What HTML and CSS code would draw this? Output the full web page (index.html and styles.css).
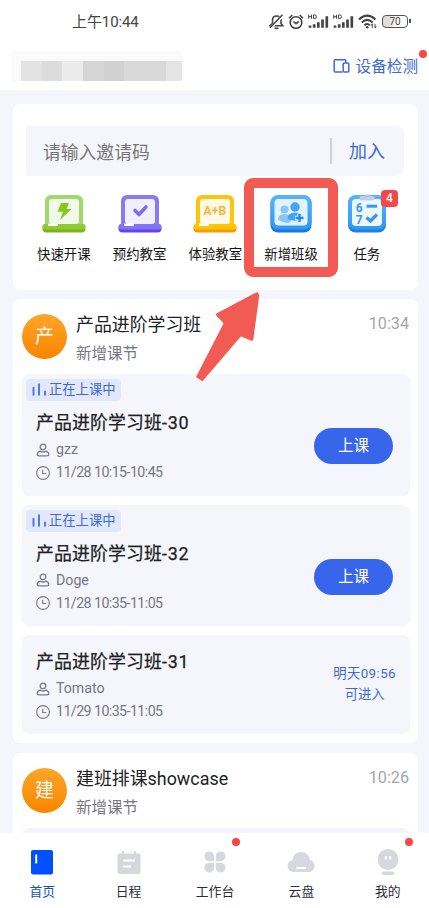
FILE: index.html
```html
<!DOCTYPE html>
<html lang="zh-CN">
<head>
<meta charset="utf-8">
<meta name="viewport" content="width=device-width, initial-scale=1">
<title>首页</title>
<link rel="stylesheet" href="styles.css">
</head>
<body>
<svg class="defs" width="0" height="0" aria-hidden="true">
  <defs>
    <linearGradient id="blue" x1="0" y1="0" x2="0" y2="1"><stop offset="0" stop-color="#55b4ff"/><stop offset="1" stop-color="#2f97f5"/></linearGradient>
    <symbol id="person" viewBox="0 0 14 14"><g fill="none" stroke="#777b89" stroke-width="1.3"><circle cx="7" cy="3.9" r="2.8"/><path d="M4.300 8.200C2.200 8.800 1.200 9.900 1.200 11.200c0 1.100.8 1.600 1.800 1.600h8c1 0 1.800-.5 1.800-1.600 0-1.300-1-2.400-3.100-3-1.700 1-3.700 1-5.400 0z"/></g></symbol>
    <symbol id="clock" viewBox="0 0 14 14"><g fill="none" stroke="#777b89" stroke-width="1.1"><circle cx="7" cy="7" r="6.4"/><path d="M6.700 3.800v3.700h3.500"/></g></symbol>
    <symbol id="bars" viewBox="0 0 15 14"><path d="M1.500 4.800v7M7 1.200v10.600M13 8.500v3.300" fill="none" stroke="#4a76e6" stroke-width="1.900" stroke-linecap="round"/></symbol>
    <symbol id="signal" viewBox="0 0 21 15"><path d="M.7.7v4M3.500.7v4M.7 2.700h2.800M5.500.9v3.600h1.200q1.700 0 1.700-1.800T6.700.9z" fill="none" stroke="#444" stroke-width="1"/><path d="M2 13.800v-2.400M6.200 13.800v-3.600M10.300 13.800V8.200M14.500 13.800V5.600M18.800 13.800V2.200" fill="none" stroke="#444" stroke-width="2.700"/></symbol>
  </defs>
</svg>
<div class="page">
  <header class="top">
    <div class="status">
      <span class="status-time">上午10:44</span>
      <div class="status-icons">
        <svg width="15" height="16" viewBox="0 0 15 16"><g fill="none" stroke="#444" stroke-width="1.600"><path d="M1.200 11.700h12.600L12 9.400V6.200C12 3.800 10.200 2 7.700 2S3.500 3.800 3.500 6.200v3.200z"/><path d="M5.500 14.300h4"/><path d="M14 .8 1 14.800" stroke="#fff" stroke-width="3"/><path d="M13.500.8 1 13.800"/></g></svg>
        <svg width="16" height="16" viewBox="0 0 16 16"><g fill="none" stroke="#444" stroke-width="1.600"><circle cx="8" cy="8.500" r="5.800"/><path d="M1 4.300 4.300 1M15 4.300 11.700 1M5.400 7.500 8 9.700l2.800-2.200"/></g></svg>
        <svg width="21" height="15"><use href="#signal"/></svg>
        <svg width="21" height="15"><use href="#signal"/></svg>
        <svg width="19" height="15" viewBox="0 0 19 15"><g fill="none" stroke="#444" stroke-width="2"><path d="M1 5.400q8.200-7.600 16.400 0M3.800 8.400q5.400-5 10.800 0M6.400 11.200q2.800-2.400 5.400 0"/></g><circle cx="9.200" cy="13.200" r="1.300" fill="#444"/><path d="m13 11.600 1.300-1.800v4M17 9.800v4.200l1.300-1.800" fill="none" stroke="#444"/></svg>
        <span class="battery">70</span>
      </div>
    </div>
    <div class="titlebar">
      <div class="mask"><div class="mask-soft"></div><div class="mask-row"><i class="m0"></i><i class="m1"></i><i class="m2"></i><i class="m3"></i><i class="m4"></i><i class="m5"></i><i class="m6"></i><i class="m6"></i><i class="m7"></i></div></div>
      <div class="device"><svg width="17" height="16" viewBox="0 0 17 16"><g fill="none" stroke="#3c69d8" stroke-width="1.500"><path d="M9.500 14H2.200a1 1 0 0 1-1-1V2.800a1 1 0 0 1 1-1h9.600a1 1 0 0 1 1 1v1.700"/><rect x="10.200" y="5" width="5.600" height="9" rx="1"/></g></svg><span>设备检测</span><i class="dot device-dot"></i></div>
    </div>
  </header>

  <main class="content">
    <section class="card join-card">
      <div class="join"><span class="hint">请输入邀请码</span><span class="join-btn">加入</span></div>
      <div class="actions">
        <div class="action">
          <svg width="46" height="42" viewBox="0 0 46 42"><rect x="4" y="2" width="38" height="36" rx="6" fill="#a1d870"/><rect x="8" y="6" width="30" height="25" rx="3" fill="#f1f9e9"/><rect x="1.500" y="31" width="43" height="8.500" rx="4" fill="#7db321"/><rect x="1.500" y="31" width="43" height="5.500" rx="2.700" fill="#8fca2f"/><rect x="7" y="30.500" width="10" height="2.500" rx="1" fill="#fff"/><path d="M20 10h8l-2.500 6h5L19 27l3-8.300h-5.500z" fill="#86c71d"/></svg>
          <span>快速开课</span>
        </div>
        <div class="action">
          <svg width="46" height="42" viewBox="0 0 46 42"><rect x="4" y="2" width="38" height="36" rx="6" fill="#897af1"/><rect x="8" y="6" width="30" height="25" rx="3" fill="#f0efff"/><rect x="1.500" y="31" width="43" height="8.500" rx="4" fill="#6840ee"/><rect x="1.500" y="31" width="43" height="5.500" rx="2.700" fill="#8374f5"/><rect x="7" y="30.500" width="10" height="2.500" rx="1" fill="#fff"/><path d="m18 17.500 4 4 7-7.500" fill="none" stroke="#7d6cf0" stroke-width="3.600" stroke-linecap="round" stroke-linejoin="round"/></svg>
          <span>预约教室</span>
        </div>
        <div class="action">
          <svg width="46" height="42" viewBox="0 0 46 42"><rect x="4" y="2" width="38" height="36" rx="6" fill="#fdc50b"/><rect x="8" y="6" width="30" height="25" rx="3" fill="#fff9e5"/><rect x="1.500" y="31" width="43" height="8.500" rx="4" fill="#f49b0a"/><rect x="1.500" y="31" width="43" height="5.500" rx="2.700" fill="#ffc500"/><path d="M7 33v-2.500h6V29h3v2.500h1V33z" fill="#fff"/><text class="ab" x="23" y="22" text-anchor="middle">A+B</text></svg>
          <span>体验教室</span>
        </div>
        <div class="action">
          <svg width="46" height="42" viewBox="0 0 46 42"><rect x="2.500" y="3" width="41" height="36.500" rx="7.500" fill="#1979d6"/><rect x="2.500" y="2" width="41" height="34.500" rx="7.500" fill="url(#blue)"/><rect x="6.500" y="6" width="33" height="26.500" rx="4" fill="#e2f3ff"/><g fill="#87c6fa"><circle cx="16.500" cy="16.500" r="4"/><path d="M10 27q0-6 6.500-6t6.500 6-13 0z"/></g><g fill="#43a4f5"><circle cx="27" cy="14" r="4.700"/><path d="M19.500 26q0-6.500 7.500-6.500T34.500 26q-7.500 3.500-15 0z"/></g><path d="M31.500 20.500v9M27 25h9" stroke="#e2f3ff" stroke-width="4.500"/><path d="M31.500 21v8M27.500 25h8" stroke="#168df2" stroke-width="2.300"/></svg>
          <span>新增班级</span>
        </div>
        <div class="action">
          <svg width="46" height="42" viewBox="0 0 46 42"><rect x="4" y="3" width="38" height="36.500" rx="7.500" fill="#1f81df"/><rect x="4" y="2" width="38" height="34.500" rx="7.500" fill="url(#blue)"/><rect x="8" y="6" width="30" height="27" rx="4" fill="#edf8ff"/><rect x="15.500" y="3" width="15" height="4.500" rx="2" fill="#c0cfee"/><circle cx="23" cy="3.200" r="2" fill="#b8c8e9"/><text class="num" x="15.200" y="18.700" text-anchor="middle">6</text><text class="num" x="15.200" y="31" text-anchor="middle">7</text><path d="M22.500 13.200h10.500" stroke="#3797ef" stroke-width="3"/><path d="m22.500 24.500 4 3.500 6.500-6.500" fill="none" stroke="#3797ef" stroke-width="3.200"/></svg>
          <span>任务</span><b class="badge">4</b>
        </div>
        <div class="focus-box"></div>
        <svg class="arrow" width="70" height="96" viewBox="192 288 70 96"><path d="m257 293.500-40 21 8 8.500 16 12 11 4.500 6-44z" fill="#f15b54" stroke="#f15b54" stroke-width="2.500" stroke-linejoin="round"/><path d="m224.300 322-28.300 55 6.500 4.300 40-46.800z" fill="#f15b54"/></svg>
      </div>
    </section>

    <section class="card class-card">
      <div class="card-head"><span class="avatar">产</span><div class="names"><h2>产品进阶学习班</h2><p>新增课节</p></div><time>10:34</time></div>
      <div class="lessons">
        <article class="lesson live">
          <div class="tag"><svg width="15" height="14"><use href="#bars"/></svg><span>正在上课中</span></div>
          <div class="lesson-body"><div class="info"><h3>产品进阶学习班<span class="serial">-30</span></h3><p><svg width="14" height="14"><use href="#person"/></svg>gzz</p><p><svg width="14" height="14"><use href="#clock"/></svg><span class="date">11/28 10:15-10:45</span></p></div><span class="enter">上课</span></div>
        </article>
        <article class="lesson live">
          <div class="tag"><svg width="15" height="14"><use href="#bars"/></svg><span>正在上课中</span></div>
          <div class="lesson-body"><div class="info"><h3>产品进阶学习班<span class="serial">-32</span></h3><p><svg width="14" height="14"><use href="#person"/></svg>Doge</p><p><svg width="14" height="14"><use href="#clock"/></svg><span class="date">11/28 10:35-11:05</span></p></div><span class="enter">上课</span></div>
        </article>
        <article class="lesson next">
          <div class="lesson-body"><div class="info"><h3>产品进阶学习班<span class="serial">-31</span></h3><p><svg width="14" height="14"><use href="#person"/></svg>Tomato</p><p><svg width="14" height="14"><use href="#clock"/></svg><span class="date">11/29 10:35-11:05</span></p></div><div class="later"><span class="later-time">明天09:56</span><br>可进入</div></div>
        </article>
      </div>
    </section>

    <section class="card last-card">
      <div class="card-head"><span class="avatar">建</span><div class="names"><h2>建班排课showcase</h2><p>新增课节</p></div><time>10:26</time></div>
      <div class="lessons"><article class="lesson live"></article></div>
    </section>
  </main>

  <nav class="tabs">
    <div class="tab active"><svg width="30" height="30" viewBox="0 0 30 30"><rect x="4" y="3" width="22" height="24.500" rx="2" fill="#0050ff"/><path d="M9.200 7.500v9" stroke="#fff" stroke-width="2"/></svg><span>首页</span></div>
    <div class="tab"><svg width="30" height="30" viewBox="0 0 30 30"><rect x="3.500" y="6.500" width="23" height="20.500" rx="2" fill="#d7d8de"/><path d="M9 4v5M21 4v5" stroke="#d7d8de" stroke-width="2"/><path d="M9 13.500h12M9 19.500h8" stroke="#fff" stroke-width="2"/></svg><span>日程</span></div>
    <div class="tab"><svg width="30" height="30" viewBox="0 0 30 30"><g fill="#d7d8de"><path d="M14.200 14.200H9.100a4.900 4.900 0 1 1 5.100-5.100zM15.800 14.200h5.100a4.900 4.900 0 1 0-5.100-5.100zM14.200 15.800H9.100a4.900 4.900 0 1 0 5.100 5.100zM15.800 15.800h5.100a4.900 4.900 0 1 1-5.100 5.100z"/></g></svg><span>工作台</span><i class="dot"></i></div>
    <div class="tab"><svg width="30" height="30" viewBox="0 0 30 30"><path d="M7.500 25a6 6 0 0 1-6-6c0-3 2-5.200 4.800-5.800C7 8.500 10.500 5 15 5c4.700 0 8.300 3.200 9 8 2.600.3 4.500 3 4.500 6 0 3.500-2.400 6-5.500 6z" fill="#d7d8de"/><path d="M10.500 21h9.500" stroke="#fff" stroke-width="2"/></svg><span>云盘</span></div>
    <div class="tab"><svg width="30" height="30" viewBox="0 0 30 30"><circle cx="15" cy="12.500" r="10.500" fill="#d7d8de"/><path d="M12.800 9.700v2M17.200 9.700v2" stroke="#fff" stroke-width="2" stroke-linecap="round"/><path d="M10.500 26.200h9" stroke="#d7d8de" stroke-width="3.500" stroke-linecap="round"/></svg><span>我的</span><i class="dot"></i></div>
  </nav>
</div>
</body>
</html>
```
FILE: styles.css
```css
* { box-sizing: border-box; }
body { margin: 0; background: #f5f6fb; font-family: Roboto, "Noto Sans CJK SC", sans-serif; color: #202124; }
h2, h3, p { margin: 0; font-weight: 400; }
svg { display: block; flex: none; }
.defs { position: absolute; }
.page { width: 429px; height: 908px; display: flex; flex-direction: column; overflow: hidden; }
.dot { width: 8px; height: 8px; border-radius: 50%; background: #fb4545; }

.top { height: 90px; background: #fff; flex: none; }
.status { height: 43px; padding: 0 18px 0 72px; display: flex; align-items: center; justify-content: space-between; }
.status-time { font-size: 15px; line-height: 20px; color: #444; letter-spacing: -.1px; }
.status-icons { display: flex; align-items: center; gap: 4px; }
.battery { position: relative; width: 26px; height: 13px; margin-left: 1px; margin-right: 3px; border: 1.5px solid #555; border-radius: 4px; background: linear-gradient(90deg, #ddd 25%, #fff 55%); font-size: 10px; line-height: 11px; text-align: center; color: #444; }
.battery::after { content: ""; position: absolute; right: -4px; top: 3px; width: 2px; height: 4px; background: #555; }
.titlebar { height: 47px; padding: 0 11px; display: flex; align-items: flex-start; justify-content: space-between; }
.mask { width: 171px; margin-top: 8px; }
.mask-soft { height: 10px; background: #fafafa; }
.mask-row { height: 20px; display: flex; }
.mask-row i { flex: 0 0 20.700px; }
.mask-row .m0 { flex-basis: 10px; background: #fafafa; }
.m1 { background: #e3e3e3; } .m2 { background: #dcdcdc; } .m3 { background: #ebebeb; } .m4 { background: #d5d5d5; } .m5 { background: #d1d1d1; } .m6 { background: #d8d8d8; }
.mask-row .m7 { flex-basis: 16px; background: #e4e4e4; }
.device { position: relative; display: flex; align-items: center; gap: 6px; margin-top: 11px; height: 22px; font-size: 15.600px; color: #3c69d8; }
.device-dot { position: absolute; right: -9px; top: -4px; }
.device svg { margin-top: 1px; }

.content { flex: 1; min-height: 0; padding: 14px 11px 0 13px; display: flex; flex-direction: column; overflow: hidden; }
.card { flex: none; background: #fff; border-radius: 7px; }
.join-card { height: 186px; padding: 22px 14px 0 13px; }
.join { height: 50px; padding: 0 19px 0 17px; display: flex; align-items: center; justify-content: space-between; background: #f5f6fb; border-radius: 2px 8px 8px 2px; }
.hint { font-size: 17.800px; color: #757575; }
.join-btn { height: 26px; padding-left: 17px; line-height: 27px; border-left: 2px solid #cfd0d8; font-size: 18px; color: #3c69d8; }
.actions { position: relative; margin-top: 17px; display: grid; grid-template-columns: repeat(5, 75.750px); }
.action { position: relative; display: flex; flex-direction: column; align-items: center; gap: 10px; font-size: 13.400px; line-height: 20px; color: #111; }
.badge { position: absolute; left: 52px; top: -3px; width: 17px; height: 17px; border-radius: 4px; background: #f4474b; color: #fff; font-size: 12px; line-height: 17px; font-weight: 500; text-align: center; }
.ab { font: 700 12px Roboto, sans-serif; fill: #fab43b; letter-spacing: .3px; }
.num { font: 700 12px Roboto, sans-serif; fill: #3797ef; }
.focus-box { position: absolute; left: 218px; top: -15px; width: 94px; height: 99px; border: 10px solid #f15b54; border-radius: 9px; }
.arrow { position: absolute; left: 166px; top: 95px; z-index: 2; }

.class-card { height: 444px; margin-top: 9px; padding: 0 8px 0 9px; }
.last-card { height: 160px; margin-top: 10px; padding: 0 8px 0 9px; }
.card-head { height: 75px; display: flex; align-items: flex-start; }
.avatar { width: 45px; height: 45px; margin-top: 15px; border-radius: 50%; background: linear-gradient(#ffa62a, #f88500); color: #fff; font-size: 19px; line-height: 46px; text-align: center; }
.names { margin: 12px 0 0 9px; flex: 1; }
.names h2 { font-size: 17.900px; line-height: 28px; }
.names p { font-size: 15.500px; line-height: 30px; color: #747783; }
.card-head time { margin-top: 15px; font-size: 16.200px; line-height: 20px; color: #a3a6ad; letter-spacing: 0; margin-right: 1px; }
.lessons { display: flex; flex-direction: column; gap: 9px; }
.lesson { background: #f5f6fb; border-radius: 7px; }
.live { height: 121.500px; padding-top: 5px; }
.next { height: 99px; padding-top: 11px; }
.tag { width: 95px; height: 22px; margin-left: 4px; padding-left: 6px; display: flex; align-items: center; gap: 2px; border-radius: 4px; background: #e2e8fa; color: #3c69d8; font-size: 13.300px; line-height: 22px; white-space: nowrap; }
.lesson-body { display: flex; justify-content: space-between; padding: 0 17px 0 14px; }
.live .lesson-body { padding-top: 6px; }
.info h3 { font-size: 17.900px; line-height: 31px; letter-spacing: .1px; -webkit-text-stroke: .25px currentColor; }
.serial { letter-spacing: .8px; }
.info p { display: flex; align-items: center; gap: 6px; font-size: 14.200px; line-height: 23px; color: #747783; }
.date { letter-spacing: -.55px; }
.enter { width: 79px; height: 36px; margin-top: 21px; border-radius: 18px; background: #3765ec; color: #fff; font-size: 15.500px; line-height: 37px; text-align: center; }
.later { margin: 18px -3px 0 0; font-size: 13.300px; line-height: 20.500px; color: #3c69d8; text-align: center; }
.later-time { letter-spacing: .45px; }

.tabs { flex: none; height: 75px; margin: 0 -2px 0 -1px; padding-top: 14px; background: #fff; display: grid; grid-template-columns: repeat(5, 1fr); }
.tab { position: relative; display: flex; flex-direction: column; align-items: center; gap: 5px; font-size: 12.800px; line-height: 20px; color: #2b2c3d; }
.active { color: #1454bd; }
.tab .dot { position: absolute; left: 60px; top: -9px; }
```
